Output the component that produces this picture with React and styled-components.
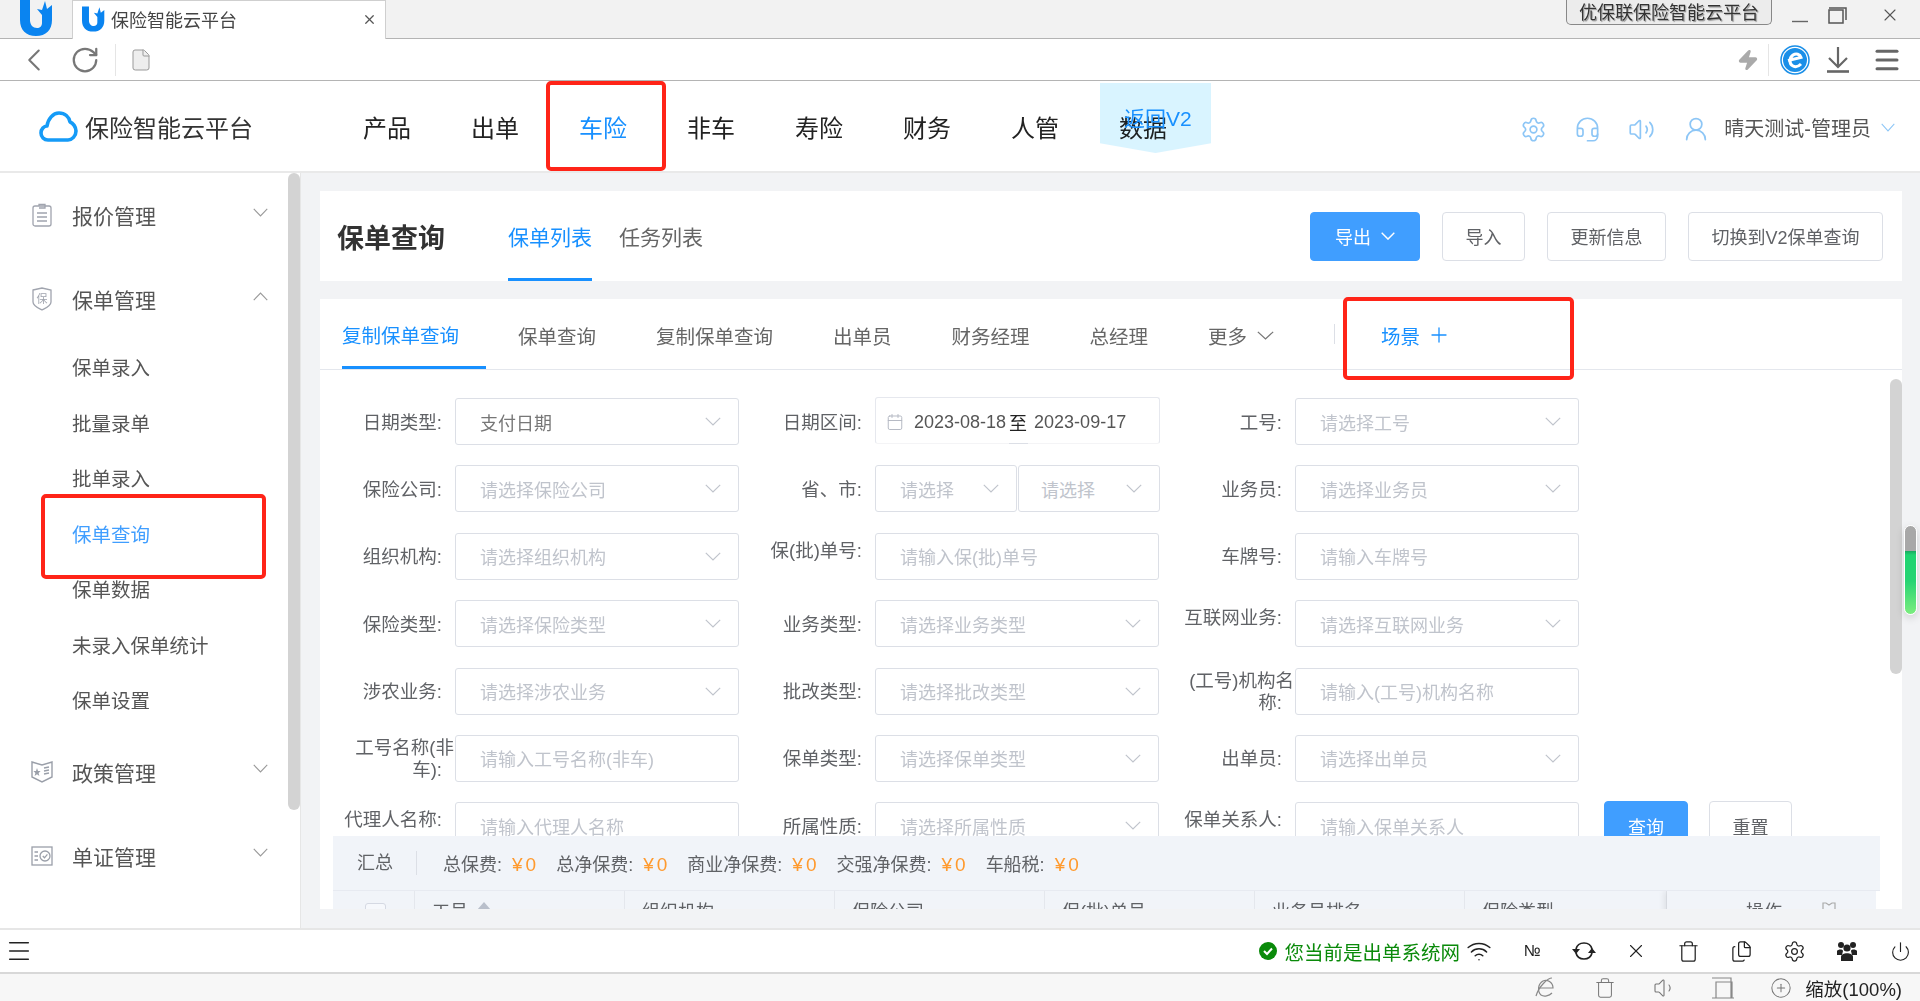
import React from 'react'
import styled, { createGlobalStyle } from 'styled-components'
import { Settings, Headset, Volume1, UserRound, Plus, Calendar, Menu, Wifi, X, Trash, Files, Power, CirclePlus, Volume2, Zap, RotateCw, ChevronLeft, File } from 'lucide-react'

const GlobalStyle = createGlobalStyle`
    html, body {
        margin: 0;
        padding: 0;
        height: 100%;
        overflow: hidden;
    }
    body {
        font-family: "Liberation Sans", "Noto Sans CJK SC", sans-serif;
        color: #606266;
    }
    * {
        box-sizing: border-box;
    }
`

const Page = styled.div`
    width: 1920px;
    height: 1001px;
    display: flex;
    flex-direction: column;
    position: relative;
    overflow: hidden;
    background: #fff;
`

/* browser chrome */

const TitleBar = styled.div`
    height: 39px;
    flex: none;
    display: flex;
    background: #f2f2f2;
    border-bottom: 1px solid #b4b4b4;
`

const AppLogo = styled.div`
    width: 72px;
    padding-left: 20px;
`

const BrowserTab = styled.div`
    width: 314px;
    height: 39px;
    display: flex;
    align-items: center;
    padding: 0 8px 2px 9px;
    background: #fff;
    border: 1px solid #cfcfcf;
    border-bottom: 0;
    font-size: 18px;
    color: #444;

    span {
        margin-left: 6px;
        flex: 1;
    }
`

const WindowControls = styled.div`
    margin-left: auto;
    display: flex;
    align-items: flex-start;
    padding-right: 20px;
`

const WindowTitle = styled.div`
    width: 206px;
    height: 25px;
    border: 1px solid #888;
    border-top: 0;
    border-radius: 0 0 5px 5px;
    font-size: 18px;
    line-height: 26px;
    text-align: center;
    color: #333;
    text-shadow: 0 0 2px #fff, 1px 1px 1px #777;
    background: #ececec;
    margin-right: 20px;
`

const WinBtn = styled.div`
    height: 30px;
    display: flex;
    align-items: center;
    margin-left: ${p => p.$gap || 0}px;
`

const ToolBar = styled.div`
    height: 42px;
    flex: none;
    display: flex;
    align-items: center;
    padding: 0 18px 0 25px;
    background: #fff;
    border-bottom: 1px solid #b4b4b4;
    color: #777;
`

const ToolDivider = styled.div`
    width: 1px;
    height: 32px;
    background: #e5e5e5;
    margin: 0 ${p => p.$right}px 0 ${p => p.$left}px;
`

const ToolRight = styled.div`
    margin-left: auto;
    display: flex;
    align-items: center;
`

const DownloadSlot = styled.div`
    width: 22px;
    margin-left: 17px;
    display: flex;
`

/* app header */

const Header = styled.div`
    height: 92px;
    flex: none;
    display: flex;
    align-items: center;
    padding-left: 39px;
    background: #fff;
    border-bottom: 2px solid #e9e9e9;
`

const Brand = styled.div`
    width: 324px;
    display: flex;
    align-items: center;
    gap: 7px;
    font-size: 24px;
    color: #333;
`

const Nav = styled.div`
    display: flex;
    gap: 60px;
`

const NavItem = styled.div`
    font-size: 24px;
    color: ${p => (p.$active ? '#1890ff' : '#222')};
`

const RibbonShape = styled.div`
    position: absolute;
    left: 1100px;
    top: 83px;
    width: 111px;
    height: 70px;
    background: #d9f4ff;
    mix-blend-mode: multiply;
    clip-path: polygon(0 0, 100% 0, 100% 86%, 50% 100%, 0 86%);
`

const RibbonText = styled.div`
    position: absolute;
    left: 1124px;
    top: 105px;
    font-size: 21px;
    line-height: 28px;
    color: #1890ff;
`

const HeaderRight = styled.div`
    margin-left: auto;
    display: flex;
    align-items: center;
    padding: 2px 25px 0 0;
    color: #8dc6f6;
`

const HeaderIcon = styled.div`
    display: flex;
    margin: 4px ${p => p.$gap}px 0 0;
`

const UserName = styled.div`
    font-size: 20px;
    color: #555;
    margin-right: 10px;
`

/* body */

const Body = styled.div`
    height: 755px;
    flex: none;
    display: flex;
`

const Sidebar = styled.div`
    width: 301px;
    flex: none;
    position: relative;
    background: #fff;
    border-right: 1px solid #e6e6e6;
    overflow: hidden;
`

const SideScroll = styled.div`
    position: absolute;
    top: 0;
    right: 0;
    width: 12px;
    height: 637px;
    border-radius: 6px;
    background: #d3d3d3;
`

const MenuRow = styled.div`
    height: 84px;
    display: flex;
    align-items: center;
    padding: 0 32px;
    font-size: 21px;
    color: #555;
`

const MenuIcon = styled.div`
    width: 20px;
    flex: none;
    display: flex;
    justify-content: center;
    margin-right: 20px;
`

const MenuChevron = styled.div`
    margin-left: auto;
    display: flex;
    margin-bottom: 6px;
    transform: ${p => (p.$open ? 'rotate(180deg)' : 'none')};
`

const SubItem = styled.div`
    height: 55.5px;
    padding-left: 72px;
    font-size: 19.5px;
    line-height: 55px;
    color: ${p => (p.$active ? '#409eff' : '#555')};
`

const Main = styled.div`
    flex: 1;
    min-width: 0;
    padding: 18px 18px 0 19px;
    background: #f2f3f5;
`

const HeadCard = styled.div`
    height: 90px;
    display: flex;
    align-items: center;
    padding: 0 19px 0 17px;
    margin-bottom: 18px;
    background: #fff;
`

const PageTitle = styled.div`
    font-size: 27px;
    font-weight: bold;
    color: #333;
    margin-right: 63px;
`

const HeadTab = styled.div`
    height: 100%;
    display: flex;
    align-items: center;
    margin-right: 27px;
    font-size: 21px;
    color: ${p => (p.$active ? '#1890ff' : '#666')};
    border-bottom: 3px solid ${p => (p.$active ? '#1890ff' : 'transparent')};
    border-top: 3px solid transparent;
`

const HeadButtons = styled.div`
    margin-left: auto;
    display: flex;
    gap: 22px;
`

const Button = styled.div`
    height: 49px;
    width: ${p => p.$w}px;
    display: flex;
    align-items: center;
    justify-content: center;
    gap: 10px;
    font-size: 18px;
    border-radius: 4px;
    color: ${p => (p.$primary ? '#fff' : '#606266')};
    background: ${p => (p.$primary ? '#409eff' : '#fff')};
    border: 1px solid ${p => (p.$primary ? '#409eff' : '#dcdfe6')};
`

const ListCard = styled.div`
    height: 610px;
    display: flex;
    flex-direction: column;
    background: #fff;
    overflow: hidden;
`

const SceneTabs = styled.div`
    height: 71px;
    flex: none;
    display: flex;
    gap: 60px;
    padding-left: 22px;
    border-bottom: 1px solid #e4e7ed;
`

const SceneTab = styled.div`
    display: flex;
    align-items: center;
    gap: 10px;
    padding-top: 2px;
    font-size: 19.5px;
    color: ${p => (p.$active ? '#1890ff' : '#666')};
    ${p => p.$active && `
        padding-top: 4px;
        padding-right: 27px;
        margin-right: -28px;
        border-bottom: 3px solid #1890ff;
    `}
`

const SceneDivider = styled.div`
    width: 1px;
    height: 20px;
    align-self: center;
    background: #dcdfe6;
`

const SceneAdd = styled(SceneTab)`
    color: #1890ff;
    gap: 7px;
    margin-left: -14px;
`

const FormArea = styled.div`
    height: 466px;
    flex: none;
    position: relative;
    overflow: hidden;
    padding: 28px 0 0 13px;
    display: flex;
    flex-direction: column;
    gap: 20.4px;
`

const FormScroll = styled.div`
    position: absolute;
    top: 9px;
    right: 0;
    width: 12px;
    height: 295px;
    border-radius: 6px;
    background: #d3d3d3;
`

const FormRow = styled.div`
    display: flex;
    height: 47px;
    flex: none;
`

const Cell = styled.div`
    width: 420px;
    flex: none;
    display: flex;
    align-items: center;
`

const Label = styled.div`
    width: 122px;
    flex: none;
    padding-right: 13px;
    font-size: 18.5px;
    line-height: 22px;
    text-align: right;
    color: #606266;
    margin-top: ${p => (p.$raised ? -11 : 2)}px;
`

const LabelOver = styled.div`
    margin-right: -12px;
    white-space: nowrap;
`

const Field = styled.div`
    width: ${p => p.$w || 284}px;
    height: 47px;
    flex: none;
    display: flex;
    align-items: center;
    justify-content: space-between;
    padding: 0 ${p => p.$right || 17}px 0 ${p => p.$left || 24}px;
    font-size: 18px;
    color: ${p => (p.$filled ? '#777' : '#c0c4cc')};
    background: #fff;
    border: 1px solid #dcdfe6;
    border-radius: 3px;
`

const DoubleField = styled.div`
    display: flex;
    gap: 1px;
`

const DateField = styled.div`
    width: 285px;
    height: 47px;
    position: relative;
    display: flex;
    align-items: center;
    padding: 3px 0 0 10px;
    margin-top: -2px;
    font-size: 18px;
    color: #555;
    border: 1px solid #e6e8ee;
    border-bottom-color: #f4f4f6;
    border-radius: 3px;

    svg {
        margin-right: 10px;
    }

    b {
        font-weight: normal;
        color: #222;
        margin: 0 7px 0 3px;
    }

    &::after {
        content: '';
        position: absolute;
        left: 133px;
        bottom: -1px;
        width: 19px;
        height: 1px;
        background: #dcdfe6;
    }
`

const QueryButtons = styled.div`
    display: flex;
    gap: 21px;
    padding-left: 11px;
    margin-top: -1px;
`

const SummaryBar = styled.div`
    height: 55px;
    flex: none;
    display: flex;
    align-items: center;
    margin: 0 22px 0 13px;
    padding-left: 24px;
    font-size: 18px;
    color: #606266;
    background: #f1f4f9;
    border-bottom: 1px solid #e7eaf1;
`

const SummaryHead = styled.div`
    padding-right: 23px;
    margin-right: 26px;
    border-right: 1px solid #dcdfe6;
    line-height: 24px;
`

const SummaryItem = styled.div`
    margin-right: 17px;

    em {
        font-style: normal;
        font-size: 19px;
        letter-spacing: 3px;
        color: #ff9a2e;
        margin-left: 10px;
    }
`

const TableHead = styled.div`
    height: 18px;
    flex: none;
    display: flex;
    margin: 0 26px 0 13px;
    overflow: hidden;
    background: #f1f4f9;
`

const HeadCell = styled.div`
    width: ${p => p.$w}px;
    flex: none;
    display: flex;
    gap: 9px;
    height: 42px;
    padding-left: 17px;
    font-size: 18px;
    line-height: 42px;
    color: #606266;
    border-right: 1px solid #e4e7ed;
`

const FixedCell = styled(HeadCell)`
    flex: 1;
    justify-content: flex-end;
    gap: 40px;
    padding-right: 40px;
    border-right: 0;
    box-shadow: -3px 0 6px rgba(0, 0, 0, 0.08);

    svg {
        margin-top: 11px;
    }
`

const CheckCell = styled(HeadCell)`
    padding-left: 32px;
`

const CheckBox = styled.div`
    width: 21px;
    height: 21px;
    margin-top: 12px;
    border: 1px solid #d5d9e3;
    border-radius: 3px;
    background: #f6f8fc;
`

const SortUp = styled.div`
    width: 14px;
    height: 8px;
    margin-top: 11px;
    background: #b9bfcb;
    clip-path: polygon(50% 0, 100% 100%, 0 100%);
`

/* bottom bars */

const BottomBar = styled.div`
    height: 46px;
    flex: none;
    display: flex;
    align-items: center;
    padding: 0 8px 0 5px;
    background: #fff;
    border-top: 2px solid #e6e6e6;
    border-bottom: 2px solid #d8d8d8;
    color: #222;
`

const NetStatus = styled.div`
    margin-left: auto;
    display: flex;
    align-items: center;
    gap: 7px;
    font-size: 19.5px;
    color: #0a8a0a;
    margin-right: 6px;
`

const BarIcon = styled.div`
    display: flex;
    align-items: center;
    justify-content: center;
    width: ${p => p.$w}px;
    margin-left: ${p => p.$gap}px;
`

const NoSign = styled.span`
    font-family: "Liberation Sans", sans-serif;
    font-size: 16px;
    color: #222;
`

const StatusBar = styled.div`
    flex: 1;
    display: flex;
    align-items: center;
    justify-content: flex-end;
    padding-right: 18px;
    background: #f7f7f7;
    color: #777;
    font-size: 18.5px;

    span {
        color: #222;
        margin-left: 13px;
    }
`

/* overlays */

const RedMark = styled.div`
    position: absolute;
    left: ${p => p.$x}px;
    top: ${p => p.$y}px;
    width: ${p => p.$w}px;
    height: ${p => p.$h}px;
    border: 4px solid #ff2418;
    border-radius: 5px;
`

const GreenGauge = styled.div`
    position: absolute;
    left: 1904px;
    top: 525px;
    width: 13px;
    height: 90px;
    border: 1px solid #fff;
    border-radius: 7px;
    overflow: hidden;
    background: linear-gradient(#a8a8a8 0, #a8a8a8 25px, #18a860 25px, #1fd471 29px, #27d473 55px, #7ced7f 100%);
    box-shadow: 0 3px 8px rgba(0, 0, 0, 0.15);
`

/* drawings */

const Chevron = ({ w = 16, h = 9, color = '#c0c4cc', sw = 1.2 }) => (
    <svg width={w} height={h} viewBox="0 0 16 9" preserveAspectRatio="none" fill="none" style={{ flex: 'none' }}>
        <path d="M.8.8 8 8 15.2.8" stroke={color} strokeWidth={sw} />
    </svg>
)

const ULogo = ({ w, h }) => (
    <svg width={w} height={h} viewBox="0 0 33 36">
        <path fill="#0a84f0" d="M0 0H10V20C10 25 13 28 17 28 20 28 22 26 22 23V15L17 9 22 10 25 1 27 9 32 5V20C32 30 26 36 16 36 6 36 0 30 0 20Z" />
    </svg>
)

const Cloud = () => (
    <svg width="39" height="31" viewBox="0 0 39 31" fill="none">
        <path stroke="#159bf7" strokeWidth="3.6" strokeLinejoin="round" d="M9 29C5 29 2 26 2 22 2 18 5 15 8 15 9 8 14 2 20 2 26 2 30 6 31 11 34 12 37 16 37 20 37 25 33 29 29 29Z" />
    </svg>
)

const IeLogo = () => (
    <svg width="30" height="30" viewBox="0 0 30 30" fill="none">
        <circle cx="15" cy="15" r="14" fill="#fff" stroke="#1a8fe8" strokeWidth="1.5" />
        <circle cx="15" cy="15" r="12" fill="#1a8fe8" />
        <path stroke="#fff" strokeWidth="3" d="M8 15.5 21 12.5C20 9 16 8 13 10 9 13 9 19 13 21 16 22.5 19 21 21 19" />
    </svg>
)

const DownloadArrow = () => (
    <svg width="22" height="26" viewBox="0 0 22 26" fill="none" stroke="#666" strokeWidth="2.2">
        <path d="M11 0V19M2 11 11 20 20 11" />
        <path d="M0 24.5H22" strokeWidth="2.6" />
    </svg>
)

const ClipboardIcon = () => (
    <svg width="20" height="24" viewBox="0 0 20 24" fill="none" stroke="#a0a4ae" strokeWidth="1.3">
        <rect x="1" y="3" width="18" height="20" rx="2" />
        <path d="M7 3V1.5H13V3M7 5H13V3M5 10H15M5 14H15M5 18H15" />
    </svg>
)

const ShieldIcon = () => (
    <svg width="20" height="24" viewBox="0 0 20 24" fill="none" stroke="#a0a4ae" strokeWidth="1.3">
        <path d="M1 3 10 1 19 3V15C19 19 14 21 10 23 6 21 1 19 1 15Z" />
        <text x="10" y="16" fontSize="11" textAnchor="middle" fill="#a0a4ae" stroke="none">保</text>
    </svg>
)

const BookIcon = () => (
    <svg width="22" height="24" viewBox="0 0 22 24" fill="none" stroke="#9a9fa9" strokeWidth="1.4" style={{ flex: 'none' }}>
        <path d="M1 2 11 5 21 2V17L11 22 1 17Z" />
        <path d="M13 8 18 7M13 11 18 10M13 14 18 13" />
        <path fill="#9a9fa9" stroke="none" d="M6 8 7 11H9.6L7.6 13 8.4 16 6 14.2 3.6 16 4.4 13 2.4 11H5Z" />
    </svg>
)

const CertIcon = () => (
    <svg width="22" height="20" viewBox="0 0 22 20" fill="none" stroke="#9a9fa9" strokeWidth="1.3" style={{ flex: 'none' }}>
        <rect x="1" y="1" width="20" height="18" />
        <path d="M3.5 6H7M3.5 10H7M3.5 14H7" />
        <circle cx="14" cy="10" r="5" />
        <path d="M11.8 10 13.5 11.8 16.4 8.4" />
    </svg>
)

const GreenCheck = () => (
    <svg width="18" height="18" viewBox="0 0 18 18">
        <circle cx="9" cy="9" r="9" fill="#0a8a0a" />
        <path d="M5 9 8 12 13 6.5" fill="none" stroke="#fff" strokeWidth="2" />
    </svg>
)

const SyncIcon = () => (
    <svg width="24" height="24" viewBox="0 0 24 24" fill="none" stroke="#222" strokeWidth="1.7">
        <path d="M4 10C5 6 8 4 12 4 16 4 19 6 20 10" />
        <path d="M20 14C19 18 16 20 12 20 8 20 5 18 4 14" />
        <path fill="#222" stroke="none" d="M0 10H8L4 15ZM16 14H24L20 9Z" />
    </svg>
)

const PeopleIcon = () => (
    <svg width="22" height="22" viewBox="0 0 22 22" fill="#222">
        <circle cx="5" cy="5" r="3" />
        <circle cx="17" cy="5" r="3" />
        <circle cx="11" cy="8" r="3.6" />
        <path d="M1 11C2 9 7 9 7 11L6 15H1ZM21 11C20 9 15 9 15 11L16 15H21Z" />
        <path d="M5 21V17C5 12 17 12 17 17V21Z" />
    </svg>
)

const ColumnSetIcon = () => (
    <svg width="14" height="12" viewBox="0 0 14 12" fill="none" stroke="#aaa" strokeWidth="1.2">
        <path d="M1 1 4 1 7 3 10 1 13 1V12H1Z" />
    </svg>
)

const Select = ({ text, filled, w, left }) => (
    <Field $filled={filled} $w={w} $left={left}>
        <span>{text}</span>
        <Chevron />
    </Field>
)

const FormCell = ({ label, over, raised, children }) => (
    <Cell>
        <Label $raised={raised}>
            {over && <LabelOver>{over}</LabelOver>}
            {label}
        </Label>
        {children}
    </Cell>
)

const subMenus = ['保单录入', '批量录单', '批单录入', '保单查询', '保单数据', '未录入保单统计', '保单设置']

const sums = ['总保费:', '总净保费:', '商业净保费:', '交强净保费:', '车船税:']

const columns = [
    ['组织机构', 210],
    ['保险公司', 210],
    ['保(批)单号', 210],
    ['业务员排名', 210],
    ['保险类型', 202],
]

function App() {
    return (
        <Page>
            <GlobalStyle />

            <TitleBar>
                <AppLogo><ULogo w={33} h={36} /></AppLogo>
                <BrowserTab>
                    <ULogo w={23} h={28} />
                    <span>保险智能云平台</span>
                    <X size={15} strokeWidth={2} color="#555" />
                </BrowserTab>
                <WindowControls>
                    <WindowTitle>优保联保险智能云平台</WindowTitle>
                    <WinBtn>
                        <svg width="16" height="16" viewBox="0 0 16 16"><path d="M0 14.5H16" stroke="#666" strokeWidth="1.4" /></svg>
                    </WinBtn>
                    <WinBtn $gap={20}>
                        <svg width="19" height="18" viewBox="0 0 19 18" fill="none" stroke="#555" strokeWidth="1.5"><path d="M1 4H15V17H1ZM1 2H18V14" /></svg>
                    </WinBtn>
                    <WinBtn $gap={33}><X size={20} strokeWidth={1.3} color="#555" /></WinBtn>
                </WindowControls>
            </TitleBar>

            <ToolBar>
                <ChevronLeft size={38} strokeWidth={1.3} style={{ marginLeft: -10 }} />
                <RotateCw size={30} strokeWidth={1.8} style={{ marginLeft: 17 }} />
                <ToolDivider $left={15} $right={13} />
                <File size={24} strokeWidth={1} fill="#eee" color="#999" />
                <ToolRight>
                    <Zap size={22} fill="#aaa" color="#aaa" />
                    <ToolDivider $left={9} $right={11} />
                    <IeLogo />
                    <DownloadSlot><DownloadArrow /></DownloadSlot>
                    <Menu size={30} strokeWidth={2.4} color="#666" style={{ marginLeft: 23 }} />
                </ToolRight>
            </ToolBar>

            <Header>
                <Brand><Cloud />保险智能云平台</Brand>
                <Nav>
                    <NavItem>产品</NavItem>
                    <NavItem>出单</NavItem>
                    <NavItem $active>车险</NavItem>
                    <NavItem>非车</NavItem>
                    <NavItem>寿险</NavItem>
                    <NavItem>财务</NavItem>
                    <NavItem>人管</NavItem>
                    <NavItem>数据</NavItem>
                </Nav>
                <HeaderRight>
                    <HeaderIcon $gap={27}><Settings size={27} strokeWidth={1.5} /></HeaderIcon>
                    <HeaderIcon $gap={27}><Headset size={27} strokeWidth={1.5} /></HeaderIcon>
                    <HeaderIcon $gap={27}><Volume2 size={27} strokeWidth={1.5} /></HeaderIcon>
                    <HeaderIcon $gap={14}><UserRound size={28} strokeWidth={1.5} /></HeaderIcon>
                    <UserName>晴天测试-管理员</UserName>
                    <Chevron w={14} h={9} color="#8dc6f6" />
                </HeaderRight>
            </Header>
            <RibbonShape />
            <RibbonText>返回V2</RibbonText>

            <Body>
                <Sidebar>
                    <SideScroll />
                    <MenuRow><MenuIcon><ClipboardIcon /></MenuIcon>报价管理<MenuChevron><Chevron w={15} h={9} color="#999" /></MenuChevron></MenuRow>
                    <MenuRow><MenuIcon><ShieldIcon /></MenuIcon>保单管理<MenuChevron $open><Chevron w={15} h={9} color="#999" /></MenuChevron></MenuRow>
                    {subMenus.map(name => (
                        <SubItem key={name} $active={name === '保单查询'}>{name}</SubItem>
                    ))}
                    <MenuRow><MenuIcon><BookIcon /></MenuIcon>政策管理<MenuChevron><Chevron w={15} h={9} color="#999" /></MenuChevron></MenuRow>
                    <MenuRow><MenuIcon><CertIcon /></MenuIcon>单证管理<MenuChevron><Chevron w={15} h={9} color="#999" /></MenuChevron></MenuRow>
                </Sidebar>

                <Main>
                    <HeadCard>
                        <PageTitle>保单查询</PageTitle>
                        <HeadTab $active>保单列表</HeadTab>
                        <HeadTab>任务列表</HeadTab>
                        <HeadButtons>
                            <Button $primary $w={110}>导出<Chevron w={14} h={8} color="#fff" sw={1.6} /></Button>
                            <Button $w={83}>导入</Button>
                            <Button $w={119}>更新信息</Button>
                            <Button $w={195}>切换到V2保单查询</Button>
                        </HeadButtons>
                    </HeadCard>

                    <ListCard>
                        <SceneTabs>
                            <SceneTab $active>复制保单查询</SceneTab>
                            <SceneTab>保单查询</SceneTab>
                            <SceneTab>复制保单查询</SceneTab>
                            <SceneTab>出单员</SceneTab>
                            <SceneTab>财务经理</SceneTab>
                            <SceneTab>总经理</SceneTab>
                            <SceneTab>更多<Chevron w={17} h={9} color="#777" /></SceneTab>
                            <SceneDivider />
                            <SceneAdd>场景<Plus size={24} strokeWidth={1.3} /></SceneAdd>
                        </SceneTabs>

                        <FormArea>
                            <FormScroll />
                            <FormRow>
                                <FormCell label="日期类型:"><Select text="支付日期" filled /></FormCell>
                                <FormCell label="日期区间:">
                                    <DateField>
                                        <Calendar size={18} strokeWidth={1.3} color="#b4b8c2" />
                                        2023-08-18<b>至</b>2023-09-17
                                    </DateField>
                                </FormCell>
                                <FormCell label="工号:"><Select text="请选择工号" /></FormCell>
                            </FormRow>
                            <FormRow>
                                <FormCell label="保险公司:"><Select text="请选择保险公司" /></FormCell>
                                <FormCell label="省、市:">
                                    <DoubleField>
                                        <Select text="请选择" w={142} />
                                        <Select text="请选择" w={142} left={22} />
                                    </DoubleField>
                                </FormCell>
                                <FormCell label="业务员:"><Select text="请选择业务员" /></FormCell>
                            </FormRow>
                            <FormRow>
                                <FormCell label="组织机构:"><Select text="请选择组织机构" /></FormCell>
                                <FormCell label="保(批)单号:" raised><Field>请输入保(批)单号</Field></FormCell>
                                <FormCell label="车牌号:"><Field>请输入车牌号</Field></FormCell>
                            </FormRow>
                            <FormRow>
                                <FormCell label="保险类型:"><Select text="请选择保险类型" /></FormCell>
                                <FormCell label="业务类型:"><Select text="请选择业务类型" /></FormCell>
                                <FormCell label="互联网业务:" raised><Select text="请选择互联网业务" /></FormCell>
                            </FormRow>
                            <FormRow>
                                <FormCell label="涉农业务:"><Select text="请选择涉农业务" /></FormCell>
                                <FormCell label="批改类型:"><Select text="请选择批改类型" /></FormCell>
                                <FormCell over="(工号)机构名" label="称:"><Field>请输入(工号)机构名称</Field></FormCell>
                            </FormRow>
                            <FormRow>
                                <FormCell over="工号名称(非" label="车):"><Field>请输入工号名称(非车)</Field></FormCell>
                                <FormCell label="保单类型:"><Select text="请选择保单类型" /></FormCell>
                                <FormCell label="出单员:"><Select text="请选择出单员" /></FormCell>
                            </FormRow>
                            <FormRow>
                                <FormCell label="代理人名称:" raised><Field>请输入代理人名称</Field></FormCell>
                                <FormCell label="所属性质:"><Select text="请选择所属性质" /></FormCell>
                                <FormCell label="保单关系人:" raised><Field>请输入保单关系人</Field></FormCell>
                                <QueryButtons>
                                    <Button $primary $w={84}>查询</Button>
                                    <Button $w={83}>重置</Button>
                                </QueryButtons>
                            </FormRow>
                        </FormArea>

                        <SummaryBar>
                            <SummaryHead>汇总</SummaryHead>
                            {sums.map(name => (
                                <SummaryItem key={name}>{name}<em>¥0</em></SummaryItem>
                            ))}
                        </SummaryBar>
                        <TableHead>
                            <CheckCell $w={82}><CheckBox /></CheckCell>
                            <HeadCell $w={210}>工号<SortUp /></HeadCell>
                            {columns.map(([name, w]) => (
                                <HeadCell key={name} $w={w}>{name}</HeadCell>
                            ))}
                            <FixedCell>操作<ColumnSetIcon /></FixedCell>
                        </TableHead>
                    </ListCard>
                </Main>
            </Body>

            <BottomBar>
                <Menu size={28} strokeWidth={1.3} />
                <NetStatus><GreenCheck />您当前是出单系统网</NetStatus>
                <Wifi size={26} strokeWidth={1.4} />
                <BarIcon $w={22} $gap={29}><NoSign>№</NoSign></BarIcon>
                <BarIcon $w={24} $gap={29}><SyncIcon /></BarIcon>
                <BarIcon $w={24} $gap={28}><X size={22} strokeWidth={1.2} /></BarIcon>
                <BarIcon $w={24} $gap={28}><Trash size={23} strokeWidth={1.3} /></BarIcon>
                <BarIcon $w={24} $gap={29}><Files size={23} strokeWidth={1.3} /></BarIcon>
                <BarIcon $w={24} $gap={29}><Settings size={23} strokeWidth={1.3} /></BarIcon>
                <BarIcon $w={24} $gap={29}><PeopleIcon /></BarIcon>
                <BarIcon $w={24} $gap={29}><Power size={21} strokeWidth={1.3} /></BarIcon>
            </BottomBar>

            <StatusBar>
                <svg width="22" height="22" viewBox="0 0 22 22" fill="none" stroke="#888" strokeWidth="1.2"><path d="M4 11H19C19 5 13 2 9 4 4 7 3 14 7 18 10 20 15 19 18 16" /><path d="M18 1C14 1 5 9 2 19" /></svg>
                <BarIcon $w={22} $gap={38}><Trash size={22} strokeWidth={1.1} /></BarIcon>
                <BarIcon $w={24} $gap={37}><Volume1 size={24} strokeWidth={1.1} /></BarIcon>
                <BarIcon $w={24} $gap={34}>
                    <svg width="24" height="22" viewBox="0 0 24 22" fill="none" stroke="#888" strokeWidth="1.2"><path d="M1 1H20V21M5 5H21V21H5ZM1 21H23" /></svg>
                </BarIcon>
                <BarIcon $w={22} $gap={35}><CirclePlus size={22} strokeWidth={1.1} /></BarIcon>
                <span>缩放(100%)</span>
            </StatusBar>

            <RedMark $x={546} $y={81} $w={120} $h={90} />
            <RedMark $x={1343} $y={297} $w={231} $h={83} />
            <RedMark $x={41} $y={494} $w={225} $h={85} />
            <GreenGauge />
        </Page>
    )
}

export default App
